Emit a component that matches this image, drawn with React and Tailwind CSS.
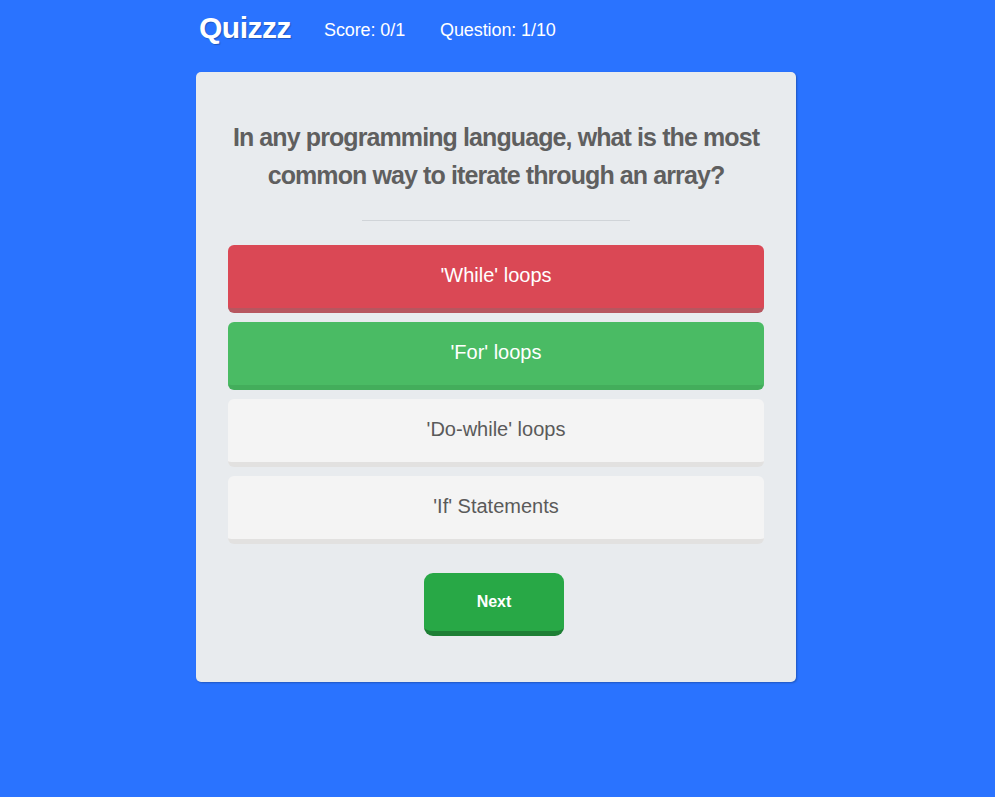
const answers = [
  { text: "'While' loops", state: 'wrong' },
  { text: "'For' loops", state: 'right' },
  { text: "'Do-while' loops", state: 'idle' },
  { text: "'If' Statements", state: 'idle' },
];

const styles = {
  wrong: 'bg-[#da4855] text-white border-b-[5px] border-[#b7565f]',
  right: 'bg-[#4abb64] text-white border-b-[5px] border-[#43ad5b]',
  idle: 'bg-[#f4f4f4] text-[#5a5a5a] border-b-[5px] border-[#e2e1e0]',
};

export default function App() {
  return (
    <div className="min-h-screen bg-[#2a73ff] font-['Liberation_Sans',Arial,sans-serif] flex justify-center pr-[3px]">
      <div className="w-[600px]">
        {/* Header */}
        <header className="h-[72px] flex items-start pt-[10px] pl-[3px] text-white">
          <h1 className="text-[30px] font-bold leading-[36px] tracking-[-0.5px] [text-shadow:1px_1px_1px_rgba(0,0,0,0.25)]">
            Quizzz
          </h1>
          <span className="ml-[33px] mt-[10px] text-[18px] leading-[20px] tracking-[-0.1px]">Score: 0/1</span>
          <span className="ml-[35px] mt-[10px] text-[18px] leading-[20px] tracking-[-0.1px]">Question: 1/10</span>
        </header>

        {/* Card */}
        <div className="bg-[#e8ebee] rounded-[5px] shadow-[1px_1px_2px_rgba(0,0,0,0.25)] px-8 pt-[46px] pb-[46px]">
          <h2 className="text-center text-[25px] font-bold leading-[38px] tracking-[-0.9px] text-[#5f5f5f]">
            In any programming language, what is the most common way to iterate through an array?
          </h2>
          <div className="w-1/2 mx-auto h-px bg-[#d0d4d8] mt-[26px] mb-[24px]" />

          <div className="flex flex-col gap-[9px]">
            {answers.map((a) => (
              <button
                key={a.text}
                className={`h-[68px] w-full rounded-[6px] text-[20px] leading-[24px] pb-[3px] ${styles[a.state]}`}
              >
                {a.text}
              </button>
            ))}
          </div>

          <div className="flex justify-center mt-[29px] pr-[4px]">
            <button className="w-[140px] h-[63px] rounded-[9px] bg-[#28a846] border-b-[5px] border-[#1e7f35] text-white text-[16px] font-bold">
              Next
            </button>
          </div>
        </div>
      </div>
    </div>
  );
}
